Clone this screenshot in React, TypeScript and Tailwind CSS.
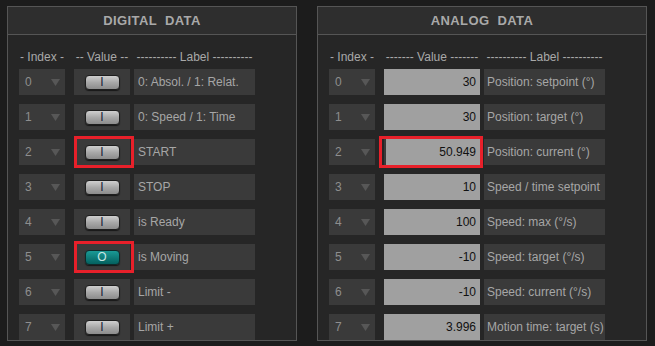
import React from "react";

const digital = [
  { label: "0: Absol. / 1: Relat.", on: false },
  { label: "0: Speed / 1: Time", on: false },
  { label: "START", on: false, hl: true },
  { label: "STOP", on: false },
  { label: "is Ready", on: false },
  { label: "is Moving", on: true, hl: true },
  { label: "Limit -", on: false },
  { label: "Limit +", on: false },
];

const analog = [
  { v: "30", label: "Position: setpoint (°)" },
  { v: "30", label: "Position: target (°)" },
  { v: "50.949", label: "Position: current (°)", hl: true },
  { v: "10", label: "Speed / time setpoint" },
  { v: "100", label: "Speed: max (°/s)" },
  { v: "-10", label: "Speed: target (°/s)" },
  { v: "-10", label: "Speed: current (°/s)" },
  { v: "3.996", label: "Motion time: target (s)" },
];

function IndexCell({ i }: { i: number }) {
  return (
    <div className="h-[26px] bg-[#3a3a3a] flex items-center justify-between pl-[6px] pr-[5px] text-[#8e8e8e]">
      <span>{i}</span>
      <svg width="9" height="7" viewBox="0 0 9 7">
        <path d="M0 0 L9 0 L4.5 7 Z" fill="#575757" />
      </svg>
    </div>
  );
}

function Panel({ title, children }: { title: string; children: React.ReactNode }) {
  return (
    <div className="border border-[#555555] bg-[#262626] flex flex-col">
      <div className="h-[28px] bg-[#2e2e2e] border-b border-[#555555] flex items-center justify-center text-[13px] font-bold text-[#a9a9a9] tracking-[0.4px] [word-spacing:4px]">
        {title}
      </div>
      {children}
    </div>
  );
}

export default function App() {
  return (
    <div
      className="w-[655px] h-[346px] overflow-hidden bg-[#1c1c1c] text-[12px] text-[#a6a6a6] pt-[6px] pl-[7px] flex gap-[20px]"
      style={{ fontFamily: '"Liberation Sans", Arial, sans-serif' }}
    >
      <div className="w-[290px] h-[400px]">
        <Panel title="DIGITAL DATA">
          <div className="pl-[11px] pt-[14px] grid grid-cols-[46px_56px_121px] gap-x-[0px] gap-y-[9px]">
            <div className="h-[16px] -mb-[5px] text-center text-[#a9a9a9] leading-[16px]">- Index -</div>
            <div className="h-[16px] -mb-[5px] text-center text-[#a9a9a9] leading-[16px] ml-[9px] w-[56px]">-- Value --</div>
            <div className="h-[16px] -mb-[5px] text-center text-[#a9a9a9] leading-[16px] ml-[13px] w-[121px]">---------- Label ----------</div>
            {digital.map((d, i) => (
              <React.Fragment key={i}>
                <IndexCell i={i} />
                <div className="relative ml-[9px] w-[56px] h-[26px] bg-[#3a3a3a] flex items-center justify-center">
                  {d.on ? (
                    <div className="w-[35px] h-[15px] rounded-[4px] border border-[#0f2a2a] bg-gradient-to-b from-[#1a9a96] to-[#04615f] flex items-center justify-center text-[12px] leading-none text-[#c8e6e4] shadow-[0_1px_1px_rgba(0,0,0,0.6)]">
                      O
                    </div>
                  ) : (
                    <div className="w-[35px] h-[15px] rounded-[4px] border border-[#1e1e1e] bg-gradient-to-b from-[#cfcfcf] via-[#a8a8a8] to-[#8c8c8c] flex items-center justify-center text-[12px] leading-none text-[#1a1a3a] shadow-[0_1px_1px_rgba(0,0,0,0.6)]">
                      I
                    </div>
                  )}
                  {d.hl && (
                    <div className="absolute -top-[3px] -bottom-[3px] left-0 -right-[4px] border-[3px] border-[#e8202a]" />
                  )}
                </div>
                <div className="ml-[13px] w-[121px] h-[26px] bg-[#3a3a3a] flex items-center pl-[4px] whitespace-nowrap overflow-hidden">
                  {d.label}
                </div>
              </React.Fragment>
            ))}
          </div>
        </Panel>
      </div>
      <div className="w-[330px] h-[400px]">
        <Panel title="ANALOG DATA">
          <div className="pl-[11px] pt-[14px] grid grid-cols-[46px_105px_125px] gap-y-[9px]">
            <div className="h-[16px] -mb-[5px] text-center text-[#a9a9a9] leading-[16px]">- Index -</div>
            <div className="h-[16px] -mb-[5px] text-center text-[#a9a9a9] leading-[16px] ml-[9px] w-[96px] whitespace-nowrap">------- Value -------</div>
            <div className="h-[16px] -mb-[5px] text-center text-[#a9a9a9] leading-[16px] ml-[4px] w-[121px] whitespace-nowrap">---------- Label ----------</div>
            {analog.map((a, i) => (
              <React.Fragment key={i}>
                <IndexCell i={i} />
                <div className="relative ml-[9px] w-[96px] h-[26px] bg-[#a0a0a0] flex items-center justify-end pr-[4px] text-[#111111]">
                  {a.hl && <div className="absolute left-0 top-0 bottom-0 w-[2px] bg-[#3a3a3a]" />}
                  {a.v}
                  {a.hl && (
                    <div className="absolute -top-[3px] -bottom-[3px] -left-[5px] -right-[3px] border-[3px] border-[#e8202a]" />
                  )}
                </div>
                <div className="ml-[4px] w-[121px] h-[26px] bg-[#3a3a3a] flex items-center pl-[3px] whitespace-nowrap overflow-hidden">
                  {a.label}
                </div>
              </React.Fragment>
            ))}
          </div>
        </Panel>
      </div>
    </div>
  );
}
